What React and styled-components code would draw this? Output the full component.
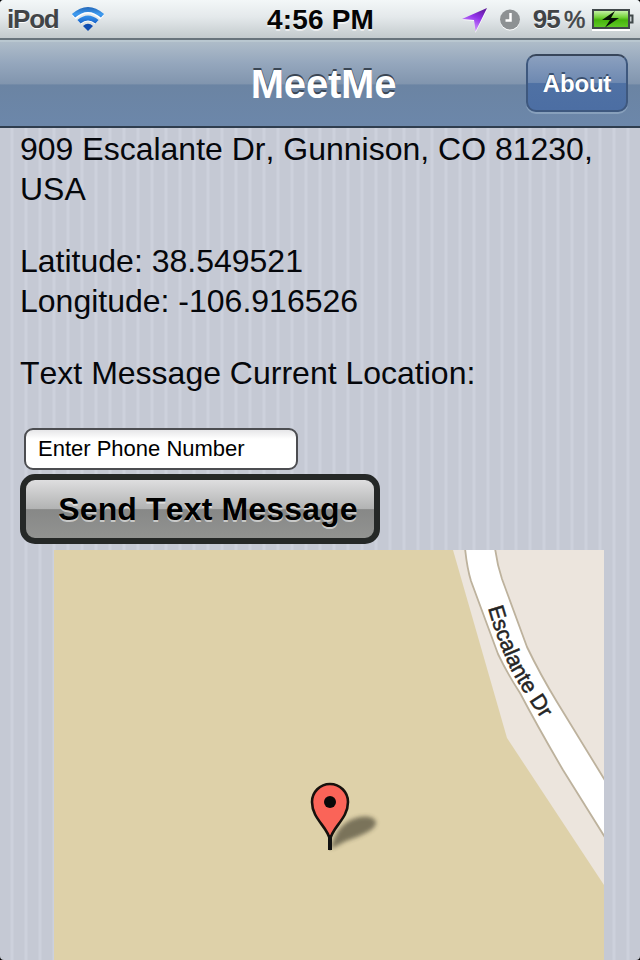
import React, { useState } from "react";
import styled, { createGlobalStyle } from "styled-components";

const GlobalStyle = createGlobalStyle`
  * {
    box-sizing: border-box;
  }

  body {
    margin: 0;
    background: #000;
    font-family: "Liberation Sans", Arial, sans-serif;
  }
`;

const Screen = styled.div`
  width: 640px;
  height: 960px;
  display: flex;
  flex-direction: column;
  overflow: hidden;
  border-radius: 4px;
  background: repeating-linear-gradient(
    90deg,
    #c5c9d4 0,
    #c5c9d4 10px,
    #cdd1dc 11px,
    #cdd1dc 13px,
    #c5c9d4 14px
  );
`;

const StatusBar = styled.header`
  height: 40px;
  flex: none;
  display: grid;
  grid-template-columns: 1fr auto 1fr;
  align-items: center;
  padding: 0 6px 0 7px;
  border-bottom: 2px solid #68747c;
  background: linear-gradient(#f3f7f8 0, #e4e9eb 45%, #c3cacd 100%);
`;

const StatusGroup = styled.div`
  display: flex;
  align-items: center;
  justify-content: ${(props) => (props.$end ? "flex-end" : "flex-start")};
`;

const Device = styled.span`
  width: 52px;
  margin-right: 12px;
  padding-top: 1px;
  color: #414447;
  font: bold 26px/37px "Liberation Sans", Arial, sans-serif;
  letter-spacing: -1.2px;
  text-shadow: 0 1px 0 #fff;
`;

const Clock = styled.span`
  padding-top: 2px;
  color: #050505;
  font-size: 28px;
  font-weight: bold;
  line-height: 36px;
  letter-spacing: 0.2px;
  text-shadow: 0 2px 0 rgba(255, 255, 255, 0.6);
`;

const AlarmSlot = styled.span`
  display: flex;
  margin: 0 12px 0 11px;
`;

const Percent = styled.span`
  display: flex;
  gap: 4px;
  margin-right: 8px;
  padding-top: 1px;
  color: #414447;
  font-size: 26px;
  font-weight: bold;
  line-height: 37px;
  letter-spacing: -0.8px;
  text-shadow: 0 1px 0 #fff;
`;

const PercentSign = styled.span`
  width: 20px;
  font-size: 24px;
  font-weight: normal;
  -webkit-text-stroke: 0.6px #414447;
`;

const NavBar = styled.nav`
  height: 88px;
  flex: none;
  display: grid;
  grid-template-columns: 1fr auto 1fr;
  align-items: center;
  padding: 0 12px 2px;
  border-top: 2px solid #b9c7d0;
  border-bottom: 2px solid #2f3d4e;
  background: linear-gradient(#aebcc9 0, #95a7bd 25%, #8195ae 50%, #6b84a3 51%, #6c87aa 100%);
`;

const Title = styled.h1`
  grid-column: 2;
  margin: 0;
  padding: 2px 0 0 7px;
  color: #fff;
  font-size: 40px;
  line-height: 46px;
  letter-spacing: -0.2px;
  text-shadow: 0 -2px 0 #3a4654;
`;

const NavButton = styled.button`
  justify-self: end;
  width: 102px;
  height: 58px;
  padding: 1px 0 0;
  border: 2px solid #3e587e;
  border-top-color: #38465b;
  border-radius: 10px;
  background: linear-gradient(#8ba0bf 0, #6e89b1 49%, #4f71a4 51%, #4c6ea3 100%);
  box-shadow: 0 2px 0 rgba(190, 208, 225, 0.35);
  color: #fff;
  font: bold 24px "Liberation Sans", Arial, sans-serif;
  letter-spacing: -0.2px;
  text-shadow: 0 -2px 0 #3b5170;
`;

const Content = styled.main`
  flex: 1;
  display: flex;
  flex-direction: column;
  align-items: flex-start;
  padding: 1px 20px 0;
`;

const Paragraph = styled.p`
  margin: 0 0 32px;
  color: #05070b;
  font-size: 32px;
  line-height: 40px;
  font-kerning: none;
`;

const PhoneInput = styled.input`
  width: 274px;
  height: 42px;
  margin: 3px 4px 4px;
  padding: 0 12px 1px;
  border: 2px solid #4c4d51;
  border-radius: 9px;
  background: linear-gradient(#e6e6e8 0, #fff 9px);
  color: #000;
  font: 22px "Liberation Sans", Arial, sans-serif;
  outline: none;
`;

const SendButton = styled.button`
  width: 360px;
  height: 70px;
  margin-bottom: 6px;
  padding: 0 0 0 16px;
  border: 6px solid #252827;
  border-radius: 15px;
  background: linear-gradient(#dededf 0, #b2b3b3 50%, #878887 51%, #929391 100%);
  color: #000;
  font: bold 32px "Liberation Sans", Arial, sans-serif;
  font-kerning: none;
  letter-spacing: 0.15px;
  white-space: nowrap;
  text-shadow: 0 2px 0 rgba(255, 255, 255, 0.55);
`;

const MapView = styled.svg`
  display: block;
  flex: none;
  width: 550px;
  height: 410px;
  margin-left: 34px;
`;

const WifiIcon = () => (
  <svg width="34" height="27" viewBox="0 0 34 27">
    <defs>
      <linearGradient id="wifi" gradientUnits="userSpaceOnUse" x1="0" y1="1" x2="0" y2="25">
        <stop offset="0" stopColor="#2467b8" />
        <stop offset="0.3" stopColor="#3f9cf0" />
        <stop offset="0.6" stopColor="#1f6fd2" />
        <stop offset="1" stopColor="#0d43a4" />
      </linearGradient>
    </defs>
    <g fill="none" stroke="#fff" strokeWidth="5" transform="translate(0 1)">
      <path d="M3 10.500Q17-3 31 10.500" />
      <path d="M8.500 15.500Q17 8 25.500 15.500" />
    </g>
    <g fill="none" stroke="url(#wifi)" strokeWidth="4.800">
      <path d="M2.500 9.800Q17-3 31.500 9.800" />
      <path d="M8 15.800Q17 8 26 15.800" />
    </g>
    <path d="M12 20Q17 15.500 22 20L17 25Z" fill="#0f4cb0" />
  </svg>
);

const LocationIcon = () => (
  <svg width="26" height="27" viewBox="0 0 26 27">
    <defs>
      <linearGradient id="arrow" x1="0.9" y1="0" x2="0.4" y2="1">
        <stop offset="0" stopColor="#5c1796" />
        <stop offset="0.45" stopColor="#9233ea" />
        <stop offset="1" stopColor="#dba6ff" />
      </linearGradient>
    </defs>
    <path d="M0 14L25 4L13.500 27L12 15Z" fill="#fff" opacity=".8" />
    <path d="M0 13L25 2L13.500 25.500L12 14Z" fill="url(#arrow)" />
  </svg>
);

const AlarmIcon = () => (
  <svg width="22" height="23" viewBox="0 0 22 23">
    <circle cx="11" cy="12.500" r="10" fill="#fff" />
    <circle cx="11" cy="11.500" r="10" fill="#8d9193" />
    <path d="M11.500 5V12.500H6.500" fill="none" stroke="#fff" strokeWidth="2.500" />
  </svg>
);

const BatteryIcon = () => (
  <svg width="42" height="23" viewBox="0 0 42 23">
    <defs>
      <linearGradient id="charge" x1="0" y1="0" x2="0" y2="1">
        <stop offset="0" stopColor="#d0f5b5" />
        <stop offset="0.4" stopColor="#76d33b" />
        <stop offset="0.55" stopColor="#46b40c" />
        <stop offset="1" stopColor="#63cb2a" />
      </linearGradient>
    </defs>
    <path d="M0 22H38" stroke="#fff" strokeWidth="2" />
    <rect x="1" y="2" width="36" height="18" fill="url(#charge)" stroke="#40484a" strokeWidth="2" />
    <path d="M38 7.500h2.500v7H38" fill="#c8ced0" stroke="#40484a" strokeWidth="2" />
    <path d="M23 3L10 12H18L13 19.500L27 10H19Z" fill="#071306" />
  </svg>
);

const LocationMap = () => (
  <MapView viewBox="0 0 550 410">
    <defs>
      <filter id="soft" x="-20%" y="-30%" width="140%" height="160%">
        <feGaussianBlur stdDeviation="2" />
      </filter>
      <path id="street" d="M434 58Q443 90 458 122Q467 138 477 153L497 184" />
    </defs>
    <rect width="550" height="410" fill="#ded1a9" />
    <path d="M399 0L453 188L550 335V0Z" fill="#ece5dd" />
    {/* road with its casing */}
    <path
      d="M411 -2Q413 18 417 31L444 104Q453 123 466 143Q485 179 509 220L552 289V232L503 152Q486 124 473 97L448 29Q443 14 441 -2Z"
      fill="#fff"
      stroke="#bdb29d"
      strokeWidth="1.800"
    />
    <text fill="#242424" fontSize="22" stroke="#242424" strokeWidth=".5">
      <textPath href="#street" textLength="124" lengthAdjust="spacingAndGlyphs">
        Escalante Dr
      </textPath>
    </text>
    <path
      d="M277 299C280 284 287 274 299 269C311 264 322 267 322 273C321 281 303 287 292 291Z"
      fill="#383528"
      opacity=".6"
      filter="url(#soft)"
    />
    <path
      d="M276 299V290C274 277 258 269 258 252A18 18 0 0 1 294 252C294 269 278 277 276 290Z"
      fill="#fa6458"
      stroke="#17110d"
      strokeWidth="2.600"
      strokeLinejoin="round"
    />
    <path d="M276 285V300" stroke="#111" strokeWidth="4" />
    <circle cx="276" cy="252" r="6" fill="#090909" />
  </MapView>
);

export default function App() {
  const [phone, setPhone] = useState("Enter Phone Number");

  return (
    <>
      <GlobalStyle />
      <Screen>
        <StatusBar>
          <StatusGroup>
            <Device>iPod</Device>
            <WifiIcon />
          </StatusGroup>
          <Clock>4:56 PM</Clock>
          <StatusGroup $end>
            <LocationIcon />
            <AlarmSlot>
              <AlarmIcon />
            </AlarmSlot>
            <Percent>
              95<PercentSign>%</PercentSign>
            </Percent>
            <BatteryIcon />
          </StatusGroup>
        </StatusBar>
        <NavBar>
          <Title>MeetMe</Title>
          <NavButton>About</NavButton>
        </NavBar>
        <Content>
          <Paragraph>909 Escalante Dr, Gunnison, CO 81230, USA</Paragraph>
          <Paragraph>
            Latitude: 38.549521
            <br />
            Longitude: -106.916526
          </Paragraph>
          <Paragraph>Text Message Current Location:</Paragraph>
          <PhoneInput value={phone} onChange={(e) => setPhone(e.target.value)} />
          <SendButton>Send Text Message</SendButton>
          <LocationMap />
        </Content>
      </Screen>
    </>
  );
}
